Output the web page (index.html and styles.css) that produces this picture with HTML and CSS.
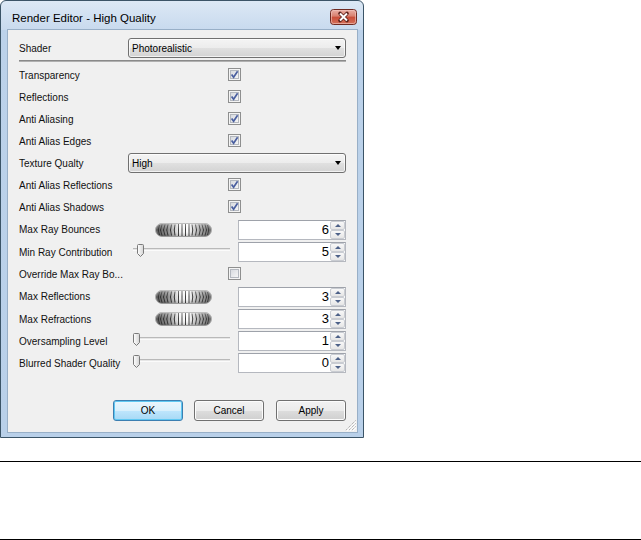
FILE: index.html
```html
<!DOCTYPE html>
<html lang="en">
<head>
  <meta charset="UTF-8" />
  <meta name="viewport" content="width=device-width, initial-scale=1.0" />
  <title>Render Editor - High Quality</title>
  <link rel="stylesheet" href="styles.css">
</head>
<body>
  <svg class="sprite" xmlns="http://www.w3.org/2000/svg">
    <defs>
      <linearGradient id="boxFill" x1="0" y1="0" x2="1" y2="1">
        <stop offset="0" stop-color="#d6d9de"/>
        <stop offset="1" stop-color="#f7f7f7"/>
      </linearGradient>
      <linearGradient id="wheelShade" x1="0" y1="0" x2="1" y2="0">
        <stop offset="0" stop-color="#555555"/>
        <stop offset="0.22" stop-color="#8a8a8a"/>
        <stop offset="0.42" stop-color="#f2f2f2"/>
        <stop offset="0.58" stop-color="#ffffff"/>
        <stop offset="0.82" stop-color="#a0a0a0"/>
        <stop offset="1" stop-color="#686868"/>
      </linearGradient>
      <linearGradient id="wheelGloss" x1="0" y1="0" x2="0" y2="1">
        <stop offset="0" stop-color="#fff" stop-opacity="0.35"/>
        <stop offset="0.5" stop-color="#fff" stop-opacity="0"/>
        <stop offset="1" stop-color="#000" stop-opacity="0.25"/>
      </linearGradient>
      <linearGradient id="thumbFill" x1="0" y1="0" x2="1" y2="0">
        <stop offset="0" stop-color="#ffffff"/>
        <stop offset="1" stop-color="#d4d4d4"/>
      </linearGradient>
      <linearGradient id="closeFill" x1="0" y1="0" x2="0" y2="1">
        <stop offset="0" stop-color="#eab1a8"/>
        <stop offset="0.45" stop-color="#d8806f"/>
        <stop offset="0.5" stop-color="#c94d38"/>
        <stop offset="1" stop-color="#d4735c"/>
      </linearGradient>
    </defs>
    <symbol id="check-on" viewBox="0 0 13 13">
      <rect x="0.5" y="0.5" width="12" height="12" fill="#f4f4f4" stroke="#8e8f8f"/>
      <rect x="2.5" y="2.5" width="8" height="8" fill="url(#boxFill)" stroke="#b4b8bf"/>
      <path d="M3.6 6.4 L5.6 9.2 L9.6 3.2" fill="none" stroke="#4a5fa0" stroke-width="1.7"/>
    </symbol>
    <symbol id="check-off" viewBox="0 0 13 13">
      <rect x="0.5" y="0.5" width="12" height="12" fill="#f4f4f4" stroke="#8e8f8f"/>
      <rect x="2.5" y="2.5" width="8" height="8" fill="url(#boxFill)" stroke="#b4b8bf"/>
    </symbol>
    <symbol id="wheel" viewBox="0 0 57 14">
      <rect x="0.5" y="0.5" width="56" height="13" rx="6.5" fill="url(#wheelShade)" stroke="#b0b0b0"/>
      <g fill="none" stroke-width="1">
        <g stroke="#2a2a2a">
          <path d="M4.5 2 Q2 7 4.5 12"/>
          <path d="M7 1.5 Q4 7 7 12.5"/>
          <path d="M10 1.5 Q7 7 10 12.5"/>
          <path d="M13 1.5 Q10.5 7 13 12.5"/>
          <path d="M16.5 1.5 Q14.5 7 16.5 12.5"/>
          <path d="M20 1.5 Q18.5 7 20 12.5"/>
        </g>
        <g stroke="#3a3a3a">
          <path d="M23.5 1 V13"/>
          <path d="M27 1 V13"/>
          <path d="M30.5 1 V13"/>
          <path d="M34 1 V13"/>
        </g>
        <g stroke="#333">
          <path d="M37 1.5 Q38.5 7 37 12.5"/>
          <path d="M40.5 1.5 Q42.5 7 40.5 12.5"/>
          <path d="M44 1.5 Q46.5 7 44 12.5"/>
          <path d="M47 1.5 Q50 7 47 12.5"/>
          <path d="M50 1.5 Q53 7 50 12.5"/>
          <path d="M52.5 2 Q55 7 52.5 12"/>
        </g>
      </g>
      <rect x="0.5" y="0.5" width="56" height="13" rx="6.5" fill="url(#wheelGloss)"/>
    </symbol>
    <symbol id="thumb" viewBox="0 0 7 13">
      <path d="M0.5 1.5 Q0.5 0.5 1.5 0.5 H5.5 Q6.5 0.5 6.5 1.5 V9.5 L3.5 12.5 L0.5 9.5 Z" fill="url(#thumbFill)" stroke="#7a7a7a"/>
    </symbol>
  </svg>

  <div class="window">
    <div class="titlebar">
      <span class="title">Render Editor - High Quality</span>
      <span class="close-btn">
        <svg width="27" height="16" viewBox="0 0 27 16">
          <rect x="0.5" y="0.5" width="26" height="15" rx="3" fill="url(#closeFill)" stroke="#6e2a22"/>
          <rect x="1.5" y="1.5" width="24" height="13" rx="2" fill="none" stroke="#f3c9c1" stroke-opacity="0.6"/>
          <path d="M10 4.5 L17 11.5 M17 4.5 L10 11.5" stroke="#5a1f18" stroke-width="3.6" stroke-linecap="round"/>
          <path d="M10 4.5 L17 11.5 M17 4.5 L10 11.5" stroke="#ffffff" stroke-width="2"/>
        </svg>
      </span>
    </div>

    <div class="frame">
      <div class="client">
        <div class="shader-row">
          <span class="label">Shader</span>
          <div class="combo">Photorealistic<span class="combo-arrow"></span></div>
        </div>
        <div class="separator"></div>

        <div class="form">
          <span class="label">Transparency</span>
          <svg class="check"><use href="#check-on"/></svg>

          <span class="label">Reflections</span>
          <svg class="check"><use href="#check-on"/></svg>

          <span class="label">Anti Aliasing</span>
          <svg class="check"><use href="#check-on"/></svg>

          <span class="label">Anti Alias Edges</span>
          <svg class="check"><use href="#check-on"/></svg>

          <span class="label">Texture Qualty</span>
          <div class="combo combo-wide">High<span class="combo-arrow"></span></div>

          <span class="label">Anti Alias Reflections</span>
          <svg class="check"><use href="#check-on"/></svg>

          <span class="label">Anti Alias Shadows</span>
          <svg class="check"><use href="#check-on"/></svg>

          <span class="label">Max Ray Bounces</span>
          <svg class="wheel"><use href="#wheel"/></svg>
          <div class="spinner"><span class="spin-value">6</span><span class="spin-arrows"><span class="spin-up"></span><span class="spin-down"></span></span></div>

          <span class="label">Min Ray Contribution</span>
          <div class="slider"><div class="track"></div><svg class="thumb thumb-moved"><use href="#thumb"/></svg></div>
          <div class="spinner"><span class="spin-value">5</span><span class="spin-arrows"><span class="spin-up"></span><span class="spin-down"></span></span></div>

          <span class="label">Override Max Ray Bo...</span>
          <svg class="check"><use href="#check-off"/></svg>

          <span class="label">Max Reflections</span>
          <svg class="wheel"><use href="#wheel"/></svg>
          <div class="spinner"><span class="spin-value">3</span><span class="spin-arrows"><span class="spin-up"></span><span class="spin-down"></span></span></div>

          <span class="label">Max Refractions</span>
          <svg class="wheel"><use href="#wheel"/></svg>
          <div class="spinner"><span class="spin-value">3</span><span class="spin-arrows"><span class="spin-up"></span><span class="spin-down"></span></span></div>

          <span class="label">Oversampling Level</span>
          <div class="slider"><div class="track"></div><svg class="thumb"><use href="#thumb"/></svg></div>
          <div class="spinner"><span class="spin-value">1</span><span class="spin-arrows"><span class="spin-up"></span><span class="spin-down"></span></span></div>

          <span class="label">Blurred Shader Quality</span>
          <div class="slider"><div class="track"></div><svg class="thumb"><use href="#thumb"/></svg></div>
          <div class="spinner"><span class="spin-value">0</span><span class="spin-arrows"><span class="spin-up"></span><span class="spin-down"></span></span></div>
        </div>

        <div class="buttons">
          <button class="btn btn-default">OK</button>
          <button class="btn btn-cancel">Cancel</button>
          <button class="btn btn-apply">Apply</button>
        </div>

        <svg class="grip" width="11" height="11" viewBox="0 0 11 11">
          <g stroke="#ffffff" stroke-width="1">
            <path d="M11 2 L2 11"/>
            <path d="M11 5 L5 11"/>
            <path d="M11 8 L8 11"/>
          </g>
          <g stroke="#9a9a9a" stroke-width="1" stroke-dasharray="1 1">
            <path d="M10.5 0.5 L0.5 10.5"/>
            <path d="M10.5 3.5 L3.5 10.5"/>
            <path d="M10.5 6.5 L6.5 10.5"/>
          </g>
        </svg>
      </div>
    </div>
  </div>

  <div class="rule rule-top"></div>
  <div class="rule rule-bottom"></div>
</body>
</html>
```

FILE: styles.css
```css
* {
  box-sizing: border-box;
  margin: 0;
  padding: 0;
}

body {
  font-family: 'Liberation Sans', Arial, sans-serif;
  font-size: 10px;
  color: #000;
  background: #fff;
}

.sprite {
  position: absolute;
  width: 0;
  height: 0;
  overflow: hidden;
}

/* window frame */
.window {
  width: 364px;
  height: 438px;
  border: 1px solid #3b5467;
  border-radius: 6px 6px 0 0;
  background: linear-gradient(#dce8f5 0, #c8daee 29px, #bcd2ea 29px, #b9d0e9 100%);
  display: flex;
  flex-direction: column;
}

.titlebar {
  height: 29px;
  display: flex;
  justify-content: space-between;
  align-items: flex-start;
  padding: 8px 6px 0 11px;
}

.title {
  font-size: 11.5px;
  line-height: 16px;
  margin-top: 1px;
  color: #000;
}

.close-btn {
  display: block;
  width: 27px;
  height: 16px;
}

.close-btn svg {
  display: block;
}

.frame {
  flex: 1;
  display: flex;
  padding: 0 6px 5px 7px;
}

.client {
  flex: 1;
  position: relative;
  background: #f0f0f0;
  padding: 8px 11px 0;
  box-shadow: 0 0 0 1px #98afc7;
}

/* rows */
.shader-row {
  display: grid;
  grid-template-columns: 109px 1fr;
  align-items: center;
  height: 20px;
}

.label {
  white-space: nowrap;
  color: #111;
}

.separator {
  margin-top: 2px;
  height: 2px;
  background: #8a8a8a;
  border-bottom: 1px solid #b0b0b0;
}

.form {
  margin-top: 2px;
  display: grid;
  grid-template-columns: 109px 110px 108px;
  grid-template-rows: repeat(7, 22px) 23px 22px 22px 23px repeat(3, 22px);
  align-items: center;
}

.form .label {
  grid-column: 1;
}

.check {
  grid-column: 2;
  width: 13px;
  height: 13px;
  margin-left: 100px;
  margin-top: -1px;
}

.combo {
  height: 20px;
  border: 1px solid #707070;
  border-radius: 3px;
  background: linear-gradient(#f4f4f4 0%, #ececec 50%, #e0e0e0 51%, #d3d3d3 100%);
  box-shadow: inset 0 0 0 1px rgba(255, 255, 255, 0.7);
  display: flex;
  align-items: center;
  justify-content: space-between;
  padding: 0 4px 0 3px;
}

.combo-wide {
  grid-column: 2 / span 2;
}

.combo-arrow {
  width: 0;
  height: 0;
  border-left: 3.5px solid transparent;
  border-right: 3.5px solid transparent;
  border-top: 4px solid #000;
}

.wheel {
  grid-column: 2;
  width: 57px;
  height: 14px;
  margin-left: 27px;
}

.slider {
  grid-column: 2;
  position: relative;
  align-self: stretch;
  width: 97px;
  margin-left: 5px;
  padding-top: 7px;
}

.track {
  height: 3px;
  border-top: 1px solid #b9b9b9;
  background: #e6e6e6;
  border-bottom: 1px solid #fbfbfb;
}

.thumb {
  position: absolute;
  top: 3px;
  left: 0;
  width: 7px;
  height: 13px;
}

.thumb-moved {
  left: 4px;
}

/* numeric spinner */
.spinner {
  grid-column: 3;
  height: 20px;
  display: flex;
  background: #fff;
  border: 1px solid #b5b8bf;
  border-top-color: #9ea2aa;
}

.spin-value {
  flex: 1;
  text-align: right;
  font-size: 13px;
  line-height: 18px;
  padding-right: 1px;
}

.spin-arrows {
  width: 15px;
  display: flex;
  flex-direction: column;
}

.spin-up,
.spin-down {
  flex: 1;
  display: flex;
  align-items: center;
  justify-content: center;
  border: 1px solid #c9ccd2;
  border-radius: 2px;
  background: linear-gradient(#f8f8f8, #e6e6e6);
}

.spin-up::after,
.spin-down::after {
  content: "";
  width: 0;
  height: 0;
  border-left: 3px solid transparent;
  border-right: 3px solid transparent;
}

.spin-up::after {
  border-bottom: 3px solid #4d6188;
}

.spin-down::after {
  border-top: 3px solid #4d6188;
}

/* dialog buttons */
.buttons {
  display: flex;
  justify-content: flex-end;
  margin-top: 26px;
}

.btn {
  width: 70px;
  height: 21px;
  font-family: inherit;
  font-size: 10px;
  color: #000;
  border: 1px solid #707070;
  border-radius: 3px;
  background: linear-gradient(#f2f2f2 0%, #ebebeb 50%, #dddddd 51%, #cfcfcf 100%);
  box-shadow: inset 0 0 0 1px #fcfcfc;
}

.btn-cancel {
  margin-left: 11px;
}

.btn-apply {
  margin-left: 12px;
}

.btn-default {
  border-color: #3c7fb1;
  background: linear-gradient(#eaf6fd 0%, #d9f0fc 50%, #bee6fd 51%, #a7d9f5 100%);
  box-shadow: inset 0 0 0 1px #5fc8f2;
}

.grip {
  position: absolute;
  right: 1px;
  bottom: 1px;
}

.rule {
  height: 1px;
  background: #000;
}

.rule-top {
  margin-top: 23px;
}

.rule-bottom {
  margin-top: 77px;
}
```
